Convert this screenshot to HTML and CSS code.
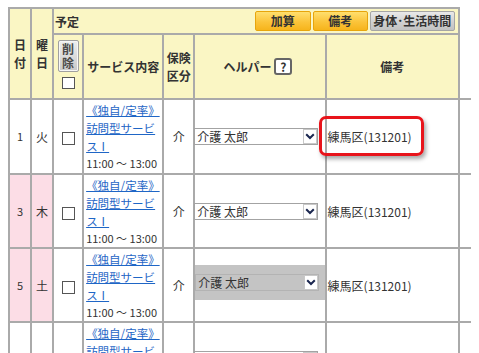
FILE: index.html
```html
<!DOCTYPE html>
<html lang="ja">
<head>
<meta charset="utf-8">
<link rel="stylesheet" href="styles.css">
</head>
<body>
<table class="grid">
  <colgroup>
    <col class="c-day"><col class="c-wd"><col class="c-del"><col class="c-svc"><col class="c-ins"><col class="c-help"><col class="c-note"><col class="c-extra">
  </colgroup>
  <thead>
    <tr class="h1">
      <th rowspan="2" class="hd first vstack">日付</th>
      <th rowspan="2" class="hd vstack">曜日</th>
      <th colspan="5" class="hd plan">
        <div class="plan-bar">
          <span class="plan-title">予定</span>
          <div class="plan-btns">
            <button class="btn orange w56">加算</button>
            <button class="btn orange w55">備考</button>
            <button class="btn gray w85">身体･生活時間</button>
          </div>
        </div>
      </th>
      <th rowspan="2" class="extra-h"><span class="mini-btn">×</span></th>
    </tr>
    <tr class="h2">
      <th class="hd"><div class="del"><button class="del-btn">削<br>除</button><span class="cb"></span></div></th>
      <th class="hd">サービス内容</th>
      <th class="hd vstack">保険区分</th>
      <th class="hd"><span class="helper">ヘルパー<span class="q">?</span></span></th>
      <th class="hd">備考</th>
    </tr>
  </thead>
  <tbody>
    <tr class="row r75">
      <td class="day first">1</td>
      <td class="wd">火</td>
      <td class="chk"><span class="cb"></span></td>
      <td class="svc"><a href="#" class="svc-link">《独自/定率》訪問型サービスⅠ</a><div class="time">11:00 〜 13:00</div></td>
      <td class="ins">介</td>
      <td class="help"><div class="select"><span class="sel-text">介護 太郎</span><span class="sel-arrow"><svg width="10" height="7" viewBox="0 0 10 7"><path d="M1.2 1.2 L5 5 L8.8 1.2" fill="none" stroke="#1b2750" stroke-width="2"/></svg></span></div></td>
      <td class="note"><span class="note-text hl">練馬区(131201)</span></td>
      <td class="extra"><span class="mini-box"></span></td>
    </tr>
    <tr class="row r74">
      <td class="day first pink">3</td>
      <td class="wd pink">木</td>
      <td class="chk"><span class="cb"></span></td>
      <td class="svc"><a href="#" class="svc-link">《独自/定率》訪問型サービスⅠ</a><div class="time">11:00 〜 13:00</div></td>
      <td class="ins">介</td>
      <td class="help"><div class="select"><span class="sel-text">介護 太郎</span><span class="sel-arrow"><svg width="10" height="7" viewBox="0 0 10 7"><path d="M1.2 1.2 L5 5 L8.8 1.2" fill="none" stroke="#1b2750" stroke-width="2"/></svg></span></div></td>
      <td class="note"><span class="note-text">練馬区(131201)</span></td>
      <td class="extra"><span class="mini-box"></span></td>
    </tr>
    <tr class="row r74">
      <td class="day first pink">5</td>
      <td class="wd pink">土</td>
      <td class="chk"><span class="cb"></span></td>
      <td class="svc"><a href="#" class="svc-link">《独自/定率》訪問型サービスⅠ</a><div class="time">11:00 〜 13:00</div></td>
      <td class="ins">介</td>
      <td class="help"><div class="band"><div class="select disabled"><span class="sel-text">介護 太郎</span><span class="sel-arrow"><svg width="10" height="7" viewBox="0 0 10 7"><path d="M1.2 1.2 L5 5 L8.8 1.2" fill="none" stroke="#1b2750" stroke-width="2"/></svg></span></div></div></td>
      <td class="note"><span class="note-text">練馬区(131201)</span></td>
      <td class="extra"><span class="mini-box"></span></td>
    </tr>
    <tr class="row r75">
      <td class="day first">7</td>
      <td class="wd">月</td>
      <td class="chk"><span class="cb"></span></td>
      <td class="svc"><a href="#" class="svc-link">《独自/定率》訪問型サービスⅠ</a><div class="time">11:00 〜 13:00</div></td>
      <td class="ins">介</td>
      <td class="help"><div class="select"><span class="sel-text">介護 太郎</span><span class="sel-arrow"><svg width="10" height="7" viewBox="0 0 10 7"><path d="M1.2 1.2 L5 5 L8.8 1.2" fill="none" stroke="#1b2750" stroke-width="2"/></svg></span></div></td>
      <td class="note"><span class="note-text">練馬区(131201)</span></td>
      <td class="extra"><span class="mini-box"></span></td>
    </tr>
  </tbody>
</table>
</body>
</html>
```

FILE: styles.css
```css
html { overflow: hidden; }
body {
  margin: 7px 8px;
  font-family: "Noto Sans CJK JP", "Noto Sans", sans-serif;
  font-size: 12px;
  color: #333;
  background: #fff;
}
.grid {
  border-collapse: separate;
  border-spacing: 0;
  table-layout: fixed;
  width: 492px;
}
.grid th, .grid td {
  box-sizing: border-box;
  border-right: 2px solid #aaa;
  border-bottom: 2px solid #aaa;
  padding: 0;
  vertical-align: middle;
  text-align: center;
  line-height: 17px;
}
.grid .first { border-left: 2px solid #aaa; }
.grid .h1 th { border-top: 2px solid #aaa; }
.grid th.extra-h {
  border-top: none;
  border-right: none;
  background: #fff;
  text-align: left;
  vertical-align: top;
  padding-top: 52px;
}
.grid td.extra { border-right: none; text-align: left; }

.c-day { width: 24px; }
.c-wd { width: 22px; }
.c-del { width: 30px; }
.c-svc { width: 80px; }
.c-ins { width: 31px; }
.c-help { width: 131px; }
.c-note { width: 133px; }
.c-extra { width: 40px; }

.h1 { height: 28px; }
.h2 { height: 65px; }
.r74 { height: 74px; }
.r75 { height: 75px; }

.hd {
  background: #faf6c4;
  font-weight: bold;
  font-size: 12px;
  color: #333;
}
.grid .vstack { line-height: 18px; padding: 0 2px; }

.grid th.plan { text-align: left; padding: 0 3px 0 1px; }
.plan-bar { display: flex; justify-content: space-between; align-items: center; }
.plan-title { font-weight: bold; }
.plan-btns { display: flex; gap: 2px; }
.btn {
  box-sizing: border-box;
  height: 20px;
  padding: 0;
  font-family: inherit;
  font-size: 12px;
  font-weight: bold;
  color: #333;
  line-height: 16px;
  border-radius: 2px;
}
.w56 { width: 56px; }
.w55 { width: 55px; }
.w85 { width: 85px; }
.orange {
  background: linear-gradient(#ffdf6e, #fbc43a 55%, #f6b41c);
  border: 1px solid #e7a50c;
}
.gray {
  background: linear-gradient(#e9e9e9, #cfcfcf 60%, #c2c2c2);
  border: 1px solid #a5a5a5;
}

.del { display: flex; flex-direction: column; align-items: center; gap: 5px; margin-top: -4px; }
.del-btn {
  box-sizing: border-box;
  width: 21px;
  height: 32px;
  padding: 0;
  font-family: inherit;
  font-size: 12px;
  font-weight: bold;
  line-height: 14px;
  color: #4a4a4a;
  background: linear-gradient(#eeeeee, #c9c9c9);
  border: 1px solid #a0a0a0;
  border-radius: 2px;
  box-shadow: inset 0 0 0 1px #f6f6f6;
}
.cb {
  display: inline-block;
  box-sizing: border-box;
  width: 13px;
  height: 13px;
  border: 1px solid #555;
  background: #fff;
  vertical-align: middle;
}
.del .cb { width: 13px; height: 12px; }

.helper { display: inline-flex; align-items: center; gap: 3px; margin-left: -4px; }
.q {
  box-sizing: border-box;
  display: inline-flex;
  align-items: center;
  justify-content: center;
  width: 18px;
  height: 17px;
  border: 2px solid #666;
  border-radius: 3px;
  background: #fff;
  font-size: 12px;
  font-weight: bold;
  color: #333;
  line-height: 1;
}

.mini-btn {
  display: inline-block;
  box-sizing: border-box;
  margin-left: 12px;
  width: 20px;
  height: 19px;
  border: 1px solid #888;
  background: linear-gradient(#f2f2f2, #d6d6d6);
  color: #777;
  font-size: 12px;
  line-height: 17px;
  padding-left: 3px;
  font-weight: normal;
}
.mini-box {
  display: inline-block;
  box-sizing: border-box;
  margin-left: 16px;
  width: 20px;
  height: 21px;
  border: 1px solid #888;
  background: #f2f2f2;
  vertical-align: middle;
}

.grid td.day { font-size: 11px; }
.grid td.wd { font-size: 12px; }
.grid td.pink { background: #fcdde6; }

.grid td.svc { text-align: left; padding-left: 2px; }
.svc-link {
  color: #1f66c6;
  text-decoration: underline;
  font-size: 11.5px;
  line-height: 17px;
}
.time { font-size: 11px; line-height: 17px; color: #333; }
.grid td.ins { font-size: 12px; }

.grid td.help { text-align: left; }
.select {
  box-sizing: border-box;
  width: 124px;
  height: 17px;
  border: 1px solid #a3a3a3;
  background: #fff;
  display: flex;
  align-items: center;
  justify-content: space-between;
  margin-left: -1px;
}
.sel-text { font-size: 12px; line-height: 15px; padding-left: 2px; color: #333; }
.sel-arrow {
  box-sizing: border-box;
  width: 14px;
  height: 15px;
  border: 1px solid #c8c8c8;
  background: #fff;
  display: flex;
  align-items: center;
  justify-content: center;
}
.band {
  background: #c4c4c4;
  height: 35px;
  display: flex;
  align-items: center;
  margin-top: -5px;
}
.select.disabled { background: #c4c4c4; border-color: #b3b3b3; margin-left: 0; }

.grid td.note { text-align: left; padding-left: 1px; }
.note-text { display: inline-block; font-size: 12px; line-height: 17px; }
.hl { position: relative; }
.hl::after {
  content: "";
  position: absolute;
  left: -9px;
  right: -12px;
  top: -12px;
  bottom: -11px;
  border: 3px solid #e8141b;
  border-radius: 7px;
  box-shadow: 2px 3px 4px rgba(0, 0, 0, 0.35);
}
```
